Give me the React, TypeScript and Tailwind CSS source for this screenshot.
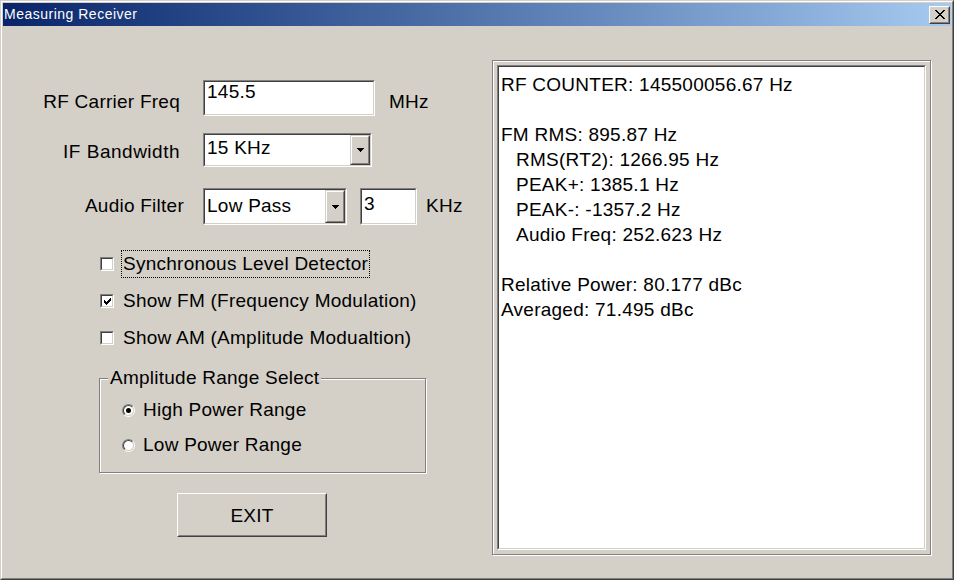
import type { ReactNode } from "react";

// classic 2px sunken edge (edit boxes, list panes, combo frames)
function Sunken({ className = "", children }: { className?: string; children?: ReactNode }) {
  return (
    <div
      className={`border border-t-[#808080] border-l-[#808080] border-r-white border-b-white ${className}`}
    >
      <div className="h-full border border-t-[#404040] border-l-[#404040] border-r-[#d4d0c8] border-b-[#d4d0c8] bg-white">
        {children}
      </div>
    </div>
  );
}

function Raised({ className = "", children }: { className?: string; children?: ReactNode }) {
  return (
    <div
      className={`border border-t-white border-l-white border-r-[#404040] border-b-[#404040] ${className}`}
    >
      <div className="flex h-full items-center justify-center border border-t-[#d4d0c8] border-l-[#d4d0c8] border-r-[#808080] border-b-[#808080] bg-[#d4d0c8]">
        {children}
      </div>
    </div>
  );
}

function DropArrow() {
  return (
    <div className="h-full w-[20px] border border-t-[#d4d0c8] border-l-[#d4d0c8] border-r-[#404040] border-b-[#404040]">
      <div className="flex h-full items-center justify-center border border-t-white border-l-white border-r-[#808080] border-b-[#808080] bg-[#d4d0c8]">
        <svg width="7" height="4" viewBox="0 0 7 4" shapeRendering="crispEdges">
          <path d="M0 0h7v1H0zM1 1h5v1H1zM2 2h3v1H2zM3 3h1v1H3z" fill="#000" />
        </svg>
      </div>
    </div>
  );
}

function Combo({ value, className, pad }: { value: string; className: string; pad: string }) {
  return (
    <Sunken className={className}>
      <div className="flex h-full">
        <div className={`flex-1 pl-[2px] leading-[19px] ${pad}`}>{value}</div>
        <DropArrow />
      </div>
    </Sunken>
  );
}

function CheckBox({ checked }: { checked?: boolean }) {
  return (
    <div className="h-[14px] w-[14px] shrink-0 border border-t-[#808080] border-l-[#808080] border-r-white border-b-white">
      <div className="flex h-full items-center justify-center border border-t-[#404040] border-l-[#404040] border-r-[#d4d0c8] border-b-[#d4d0c8] bg-white">
        {checked && (
          <svg width="7" height="7" viewBox="0 0 7 7" shapeRendering="crispEdges">
            <path
              d="M6 0h1v1H6zM5 1h2v1H5zM0 2h1v1H0zM4 2h3v1H4zM0 3h2v1H0zM3 3h3v1H3zM0 4h5v1H0zM1 5h3v1H1zM2 6h1v1H2z"
              fill="#000"
            />
          </svg>
        )}
      </div>
    </div>
  );
}

function Radio({ checked }: { checked?: boolean }) {
  return (
    <div className="h-[13px] w-[13px] shrink-0 rounded-full border border-t-[#808080] border-l-[#808080] border-r-white border-b-white">
      <div className="flex h-full items-center justify-center rounded-full border border-t-[#404040] border-l-[#404040] border-r-[#d4d0c8] border-b-[#d4d0c8] bg-white">
        {checked && <div className="h-[5px] w-[5px] rounded-full bg-black" />}
      </div>
    </div>
  );
}

const readings: { text: string; indent?: boolean }[] = [
  { text: "RF COUNTER: 145500056.67 Hz" },
  { text: "" },
  { text: "FM RMS: 895.87 Hz" },
  { text: "RMS(RT2): 1266.95 Hz", indent: true },
  { text: "PEAK+: 1385.1 Hz", indent: true },
  { text: "PEAK-: -1357.2 Hz", indent: true },
  { text: "Audio Freq: 252.623 Hz", indent: true },
  { text: "" },
  { text: "Relative Power: 80.177 dBc" },
  { text: "Averaged: 71.495 dBc" },
];

export default function App() {
  return (
    <div className="h-[580px] w-[954px] border border-t-[#d4d0c8] border-l-[#d4d0c8] border-r-[#404040] border-b-[#404040] bg-[#d4d0c8] font-['Liberation_Sans',Arial,sans-serif] text-[19px] tracking-[0.25px] text-black">
      <div className="flex h-full flex-col border border-t-white border-l-white border-r-[#808080] border-b-[#808080] p-[1px]">
        {/* title bar */}
        <div className="flex h-[23px] shrink-0 items-center justify-between bg-linear-to-r from-[#0a246a] to-[#a6caf0] pl-[1px] pr-[1px]">
          <span className="text-[14px] leading-[23px] tracking-[0.5px] text-white">Measuring Receiver</span>
          <Raised className="h-[18px] w-[21px]">
            <svg width="10" height="9" viewBox="0 0 10 9" shapeRendering="crispEdges">
              <path
                d="M0 0h2v1H0zM8 0h2v1H8zM1 1h2v1H1zM7 1h2v1H7zM2 2h2v1H2zM6 2h2v1H6zM3 3h4v1H3zM4 4h2v1H4zM3 5h4v1H3zM2 6h2v1H2zM6 6h2v1H6zM1 7h2v1H1zM7 7h2v1H7zM0 8h2v1H0zM8 8h2v1H8z"
                fill="#000"
              />
            </svg>
          </Raised>
        </div>

        <div className="flex flex-1">
          {/* settings column */}
          <div className="flex w-[489px] shrink-0 flex-col">
            <div className="mt-[54px] flex h-[36px] items-start">
              <div className="w-[177px] pt-[12px] text-right leading-[19px]">RF Carrier Freq</div>
              <Sunken className="ml-[23px] h-[36px] w-[172px]">
                <div className="pl-[2px] leading-[19px]">145.5</div>
              </Sunken>
              <div className="ml-[14px] pt-[12px] leading-[19px]">MHz</div>
            </div>

            <div className="mt-[17px] flex h-[34px] items-start">
              <div className="w-[177px] pt-[9px] text-right leading-[19px] tracking-[0.5px]">IF Bandwidth</div>
              <Combo value="15 KHz" className="ml-[23px] h-[34px] w-[169px]" pad="pt-[3px]" />
            </div>

            <div className="mt-[21px] flex h-[37px] items-start">
              <div className="w-[181px] pt-[8px] text-right leading-[19px]">Audio Filter</div>
              <Combo value="Low Pass" className="ml-[19px] h-[37px] w-[144px]" pad="pt-[6px]" />
              <Sunken className="ml-[13px] h-[37px] w-[57px]">
                <div className="pl-[2px] pt-[4px] leading-[19px]">3</div>
              </Sunken>
              <div className="ml-[9px] pt-[8px] leading-[19px]">KHz</div>
            </div>

            <div className="mt-[25px] flex h-[28px] items-center gap-[7px] pl-[97px]">
              <CheckBox />
              <span className="border border-dotted border-black px-[1px] leading-[26px]">
                Synchronous Level Detector
              </span>
            </div>
            <div className="mt-[9px] flex h-[28px] items-center gap-[7px] pl-[97px]">
              <CheckBox checked />
              <span className="border border-transparent px-[1px] leading-[26px]">
                Show FM (Frequency Modulation)
              </span>
            </div>
            <div className="mt-[9px] flex h-[28px] items-center gap-[7px] pl-[97px]">
              <CheckBox />
              <span className="border border-transparent px-[1px] leading-[26px]">
                Show AM (Amplitude Modualtion)
              </span>
            </div>

            <fieldset className="ml-[96px] mt-[15px] w-[327px] border border-[#808080] pb-[14px] shadow-[inset_1px_1px_0_#fff,1px_1px_0_#fff]">
              <legend className="ml-[8px] bg-[#d4d0c8] px-[2px] leading-[22px]">Amplitude Range Select</legend>
              <div className="mt-[8px] flex h-[26px] items-center gap-[8px] pl-[22px]">
                <Radio checked />
                <span className="leading-[26px]">High Power Range</span>
              </div>
              <div className="mt-[9px] flex h-[26px] items-center gap-[8px] pl-[22px]">
                <Radio />
                <span className="leading-[26px]">Low Power Range</span>
              </div>
            </fieldset>

            <Raised className="ml-[174px] mt-[20px] h-[44px] w-[150px]">
              <span className="leading-[19px]">EXIT</span>
            </Raised>
          </div>

          {/* readout pane */}
          <div className="mt-[34px] h-[495px] w-[439px] shrink-0 border border-[#808080] p-[4px] shadow-[inset_1px_1px_0_#fff,1px_1px_0_#fff]">
            <Sunken className="h-full">
              <div className="pl-[2px] pt-[5px] leading-[25px]">
                {readings.map((line, i) => (
                  <div key={i} className={`h-[25px] whitespace-nowrap ${line.indent ? "pl-[15px]" : ""}`}>
                    {line.text}
                  </div>
                ))}
              </div>
            </Sunken>
          </div>
        </div>
      </div>
    </div>
  );
}
